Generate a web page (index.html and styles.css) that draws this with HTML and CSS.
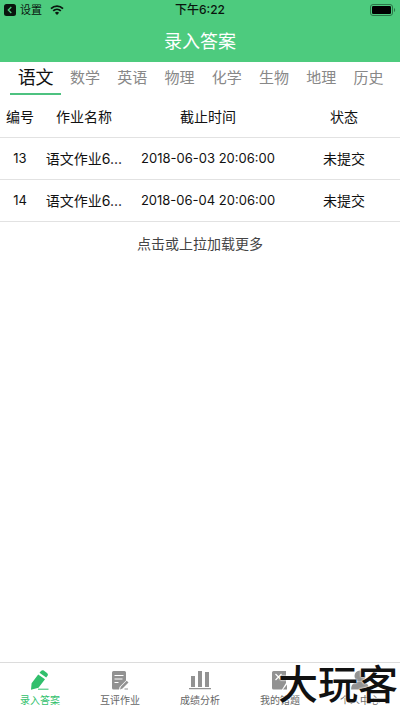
FILE: index.html
```html
<!DOCTYPE html>
<html lang="zh-CN">
<head>
<meta charset="utf-8">
<meta name="viewport" content="width=device-width, initial-scale=1">
<title>录入答案</title>
<link rel="stylesheet" href="styles.css">
</head>
<body>
<header class="header">
  <div class="status">
    <div class="status-left">
      <svg width="12" height="12" viewBox="0 0 12 12" aria-hidden="true"><rect width="12" height="12" rx="2.5" fill="#0a150e"/><path d="M7.3 3 4.3 6l3 3" fill="none" stroke="#4dcb7e" stroke-width="1.3"/></svg>
      <span>设置</span>
      <svg class="wifi" width="14" height="10" viewBox="0 0 14 10" aria-hidden="true"><path d="M1 3.6a8.7 8.7 0 0 1 12 0M3.2 5.900a5.500 5.500 0 0 1 7.600 0" fill="none" stroke="#0a150e" stroke-width="1.8"/><path d="M4.900 7.700a3 3 0 0 1 4.200 0L7 9.900z" fill="#0a150e"/></svg>
    </div>
    <span class="time">下午6:22</span>
    <svg class="battery" width="26" height="12" viewBox="0 0 26 12" aria-hidden="true"><rect x=".5" y=".5" width="22" height="11" rx="2.5" fill="none" stroke="#2c7548"/><rect x="2" y="2" width="19" height="8" rx="1.2" fill="#000"/><path d="M24 4v4c1.500-.5 1.500-3.500 0-4z" fill="#2c7548"/></svg>
  </div>
  <h1 class="title">录入答案</h1>
</header>
<nav class="tabs">
  <button class="tab active">语文</button>
  <button class="tab">数学</button>
  <button class="tab">英语</button>
  <button class="tab">物理</button>
  <button class="tab">化学</button>
  <button class="tab">生物</button>
  <button class="tab">地理</button>
  <button class="tab">历史</button>
</nav>
<main class="main">
  <table class="table">
    <colgroup><col class="col-id"><col class="col-name"><col class="col-time"><col class="col-state"></colgroup>
    <thead><tr><th>编号</th><th>作业名称</th><th>截止时间</th><th>状态</th></tr></thead>
    <tbody>
      <tr><td class="number">13</td><td>语文作业6...</td><td class="number">2018-06-03 20:06:00</td><td>未提交</td></tr>
      <tr><td class="number">14</td><td>语文作业6...</td><td class="number">2018-06-04 20:06:00</td><td>未提交</td></tr>
    </tbody>
  </table>
  <button class="more">点击或上拉加载更多</button>
</main>
<footer class="footer">
  <nav class="bottom">
    <a class="item current" href="#answers">
      <svg width="20" height="20" viewBox="0 0 20 20" aria-hidden="true"><path d="M8.200 4.400 15 9.200 8.500 17.800 1 19.700 1.600 13.200zM9.500 2.800l1.500-1.700c.8-.9 2-1 3-.3l3 2.100c1 .8 1.200 1.900.5 2.900L16.200 7.600z" fill="currentColor"/><path d="M8 19.200h10.500" stroke="currentColor" stroke-width="1"/></svg>
      <span>录入答案</span>
    </a>
    <a class="item" href="#review">
      <svg width="20" height="20" viewBox="0 0 20 20" aria-hidden="true"><path d="M3.500 1h11A1.500 1.500 0 0 1 16 2.500v8L9.500 17l-.4 2.500H3.500A1.500 1.500 0 0 1 2 18V2.500A1.500 1.500 0 0 1 3.500 1z" fill="currentColor"/><path d="M4.500 5.500h9M4.500 9h8M4.500 12.500h4" stroke="#fff" stroke-width="1"/><path d="m16.700 10.800 1.800 1.700-6 6-2.500.9.800-2.600z" fill="currentColor"/><path d="M14.500 19h3.500" stroke="currentColor"/></svg>
      <span>互评作业</span>
    </a>
    <a class="item" href="#scores">
      <svg width="24" height="20" viewBox="0 0 24 20" aria-hidden="true"><path d="M3 6h4v11H3zM10 1h4v16h-4zM17 2h4v15h-4zM1 18h22v1.300H1z" fill="currentColor"/></svg>
      <span>成绩分析</span>
    </a>
    <a class="item" href="#mistakes">
      <svg width="20" height="20" viewBox="0 0 20 20" aria-hidden="true"><path d="M3.500 1H16v12l-4 6.500H3.500A1.500 1.500 0 0 1 2 18V2.500A1.500 1.500 0 0 1 3.500 1zM13 19.500l4-5v5z" fill="currentColor"/><path d="m5.500 4 6 6m0-6-6 6" stroke="#fff" stroke-width="1.200"/></svg>
      <span>我的错题</span>
    </a>
    <a class="item" href="#profile">
      <svg width="20" height="20" viewBox="0 0 20 20" aria-hidden="true"><circle cx="10" cy="6" r="5.500" fill="currentColor"/><path d="M1 19.500c0-5 3-7 6-8h6c3 1 6 3 6 8z" fill="currentColor"/></svg>
      <span>个人中心</span>
    </a>
  </nav>
  <div class="watermark">大玩客</div>
</footer>
</body>
</html>
```
FILE: styles.css
```css
* {
  box-sizing: border-box;
}

body {
  margin: 0;
  min-height: 100vh;
  display: flex;
  flex-direction: column;
  background: #fff;
  color: #111;
  font-family: Inter, "Noto Sans CJK SC", sans-serif;
  font-size: 14px;
}

button {
  padding: 0;
  border: 0;
  background: none;
  font: inherit;
  cursor: pointer;
}

.header {
  background: #4dcb7e;
}

.status {
  display: grid;
  grid-template-columns: 1fr auto 1fr;
  align-items: center;
  height: 20px;
  padding: 0 4px;
  color: #0a150e;
  font-size: 11px;
  line-height: 20px;
}

.status-left {
  display: flex;
  align-items: center;
  gap: 4px;
}

.wifi {
  margin-left: 4px;
}

.time {
  font-size: 12px;
  font-weight: 500;
}

.battery {
  justify-self: end;
}

.title {
  margin: 0;
  padding-top: 2px;
  color: #fff;
  font-size: 18px;
  font-weight: 400;
  line-height: 40px;
  text-align: center;
}

.tabs {
  display: flex;
  height: 33px;
  padding: 0 8px 0 10px;
}

.tab {
  flex: 47;
  color: #888;
  font-size: 15px;
  line-height: 31px;
  border-bottom: 2px solid transparent;
}

.tab.active {
  flex: 51;
  color: #111;
  font-size: 18px;
  border-color: #4dc280;
}

.main {
  flex: 1;
}

.table {
  width: 100%;
  table-layout: fixed;
  border-collapse: collapse;
}

.col-id {
  width: 10%;
}

.col-name {
  width: 22%;
}

.col-time {
  width: 40%;
}

.col-state {
  width: 28%;
}

.table th,
.table td {
  height: 42px;
  padding: 0;
  border-bottom: 1px solid #e2e2e2;
  font-weight: 400;
  text-align: center;
  white-space: nowrap;
}

.table .number {
  font-size: 13px;
}

.more {
  display: block;
  width: 100%;
  color: #444;
  line-height: 44px;
}

.footer {
  position: relative;
  border-top: 1px solid #dcdcdc;
}

.bottom {
  display: flex;
}

.item {
  flex: 1;
  display: flex;
  flex-direction: column;
  align-items: center;
  gap: 3px;
  padding: 7px 0 2px;
  color: #929292;
  font-size: 10px;
  line-height: 15px;
  text-decoration: none;
}

.item span {
  color: #666;
}

.item.current,
.item.current span {
  color: #31bf6c;
}

.watermark {
  position: absolute;
  right: 2px;
  bottom: 3px;
  color: #111;
  font-size: 40px;
  font-weight: 500;
  line-height: 44px;
  text-shadow: 0 0 2px #fff, 0 0 2px #fff;
  pointer-events: none;
}
```
